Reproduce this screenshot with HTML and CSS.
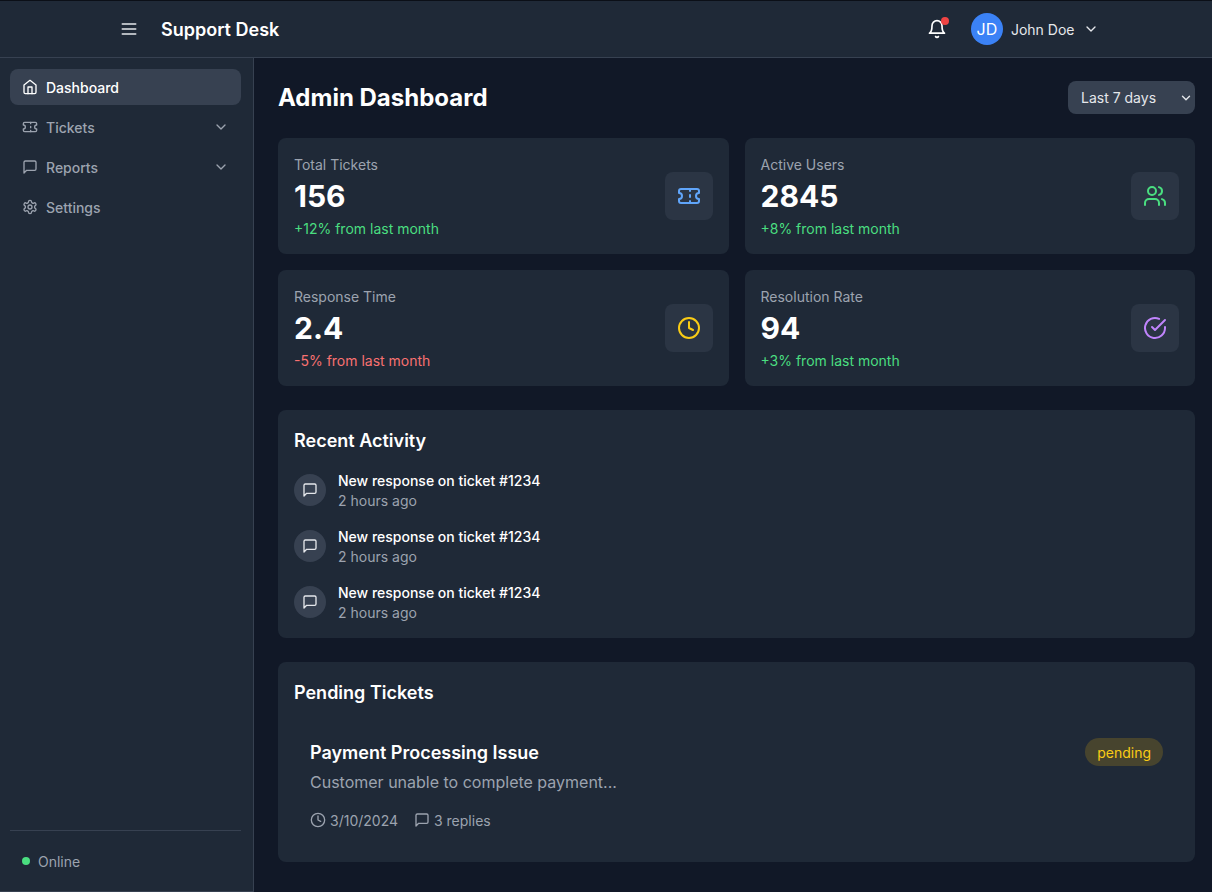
FILE: index.html
```html
<!DOCTYPE html>
<html>
<head>
    <title>Support Desk</title>
    <link rel="stylesheet" href="styles.css">
</head>
<body>
    <svg class="sprites" xmlns="http://www.w3.org/2000/svg">
        <symbol id="i-menu" viewBox="0 0 24 24"><path d="M4 6h16M4 12h16M4 18h16"/></symbol>
        <symbol id="i-home" viewBox="0 0 24 24"><path d="m3 9 9-7 9 7v11a2 2 0 0 1-2 2H5a2 2 0 0 1-2-2z"/><path d="M9 22V12h6v10"/></symbol>
        <symbol id="i-ticket" viewBox="0 0 24 24"><path d="M2 9a3 3 0 0 1 0 6v2a2 2 0 0 0 2 2h16a2 2 0 0 0 2-2v-2a3 3 0 0 1 0-6V7a2 2 0 0 0-2-2H4a2 2 0 0 0-2 2Z"/><path d="M13 5v2M13 17v2M13 11v2"/></symbol>
        <symbol id="i-message" viewBox="0 0 24 24"><path d="M21 15a2 2 0 0 1-2 2H7l-4 4V5a2 2 0 0 1 2-2h14a2 2 0 0 1 2 2z"/></symbol>
        <symbol id="i-settings" viewBox="0 0 24 24"><path d="M12.22 2h-.44a2 2 0 0 0-2 2v.18a2 2 0 0 1-1 1.73l-.43.25a2 2 0 0 1-2 0l-.15-.08a2 2 0 0 0-2.73.73l-.22.38a2 2 0 0 0 .73 2.73l.15.1a2 2 0 0 1 1 1.72v.51a2 2 0 0 1-1 1.74l-.15.09a2 2 0 0 0-.73 2.73l.22.38a2 2 0 0 0 2.73.73l.15-.08a2 2 0 0 1 2 0l.43.25a2 2 0 0 1 1 1.73V20a2 2 0 0 0 2 2h.44a2 2 0 0 0 2-2v-.18a2 2 0 0 1 1-1.73l.43-.25a2 2 0 0 1 2 0l.15.08a2 2 0 0 0 2.73-.73l.22-.39a2 2 0 0 0-.73-2.73l-.15-.08a2 2 0 0 1-1-1.74v-.5a2 2 0 0 1 1-1.74l.15-.09a2 2 0 0 0 .73-2.73l-.22-.38a2 2 0 0 0-2.73-.73l-.15.08a2 2 0 0 1-2 0l-.43-.25a2 2 0 0 1-1-1.73V4a2 2 0 0 0-2-2z"/><circle cx="12" cy="12" r="3"/></symbol>
        <symbol id="i-chevron" viewBox="0 0 24 24"><path d="m6 9 6 6 6-6"/></symbol>
        <symbol id="i-bell" viewBox="0 0 24 24"><path d="M6 8a6 6 0 0 1 12 0c0 7 3 9 3 9H3s3-2 3-9"/><path d="M10.3 21a1.94 1.94 0 0 0 3.4 0"/></symbol>
        <symbol id="i-users" viewBox="0 0 24 24"><path d="M16 21v-2a4 4 0 0 0-4-4H6a4 4 0 0 0-4 4v2"/><circle cx="9" cy="7" r="4"/><path d="M22 21v-2a4 4 0 0 0-3-3.87"/><path d="M16 3.13a4 4 0 0 1 0 7.75"/></symbol>
        <symbol id="i-clock" viewBox="0 0 24 24"><circle cx="12" cy="12" r="10"/><path d="M12 6v6l4 2"/></symbol>
        <symbol id="i-check" viewBox="0 0 24 24"><path d="M22 11.08V12a10 10 0 1 1-5.93-9.14"/><path d="M22 4 12 14.01l-3-3"/></symbol>
    </svg>

    <header class="topbar">
        <div class="topbar-left">
            <svg class="icon icon-20"><use href="#i-menu"/></svg>
            <span class="brand">Support Desk</span>
        </div>
        <div class="topbar-right">
            <div class="bell">
                <svg class="icon icon-20"><use href="#i-bell"/></svg>
                <span class="bell-dot"></span>
            </div>
            <div class="user">
                <span class="avatar">JD</span>
                <span class="user-name">John Doe</span>
                <svg class="icon icon-16"><use href="#i-chevron"/></svg>
            </div>
        </div>
    </header>

    <div class="layout">
        <aside class="sidebar">
            <nav class="nav">
                <a class="nav-item active"><svg class="icon icon-16"><use href="#i-home"/></svg><span>Dashboard</span></a>
                <a class="nav-item"><svg class="icon icon-16"><use href="#i-ticket"/></svg><span>Tickets</span><svg class="icon icon-16 nav-chevron"><use href="#i-chevron"/></svg></a>
                <a class="nav-item"><svg class="icon icon-16"><use href="#i-message"/></svg><span>Reports</span><svg class="icon icon-16 nav-chevron"><use href="#i-chevron"/></svg></a>
                <a class="nav-item"><svg class="icon icon-16"><use href="#i-settings"/></svg><span>Settings</span></a>
            </nav>
            <div class="sidebar-footer">
                <span class="status-dot"></span>
                <span>Online</span>
            </div>
        </aside>

        <main class="content">
            <div class="page-head">
                <h1>Admin Dashboard</h1>
                <select class="range">
                    <option>Last 7 days</option>
                    <option>Last 30 days</option>
                </select>
            </div>

            <section class="stats">
                <div class="card stat">
                    <div>
                        <p class="stat-label">Total Tickets</p>
                        <p class="stat-value">156</p>
                        <p class="stat-delta up">+12% from last month</p>
                    </div>
                    <div class="stat-icon blue"><svg class="icon icon-24"><use href="#i-ticket"/></svg></div>
                </div>
                <div class="card stat">
                    <div>
                        <p class="stat-label">Active Users</p>
                        <p class="stat-value">2845</p>
                        <p class="stat-delta up">+8% from last month</p>
                    </div>
                    <div class="stat-icon green"><svg class="icon icon-24"><use href="#i-users"/></svg></div>
                </div>
                <div class="card stat">
                    <div>
                        <p class="stat-label">Response Time</p>
                        <p class="stat-value">2.4</p>
                        <p class="stat-delta down">-5% from last month</p>
                    </div>
                    <div class="stat-icon yellow"><svg class="icon icon-24"><use href="#i-clock"/></svg></div>
                </div>
                <div class="card stat">
                    <div>
                        <p class="stat-label">Resolution Rate</p>
                        <p class="stat-value">94</p>
                        <p class="stat-delta up">+3% from last month</p>
                    </div>
                    <div class="stat-icon purple"><svg class="icon icon-24"><use href="#i-check"/></svg></div>
                </div>
            </section>

            <section class="card panel">
                <h2>Recent Activity</h2>
                <div class="activity">
                    <div class="activity-item">
                        <span class="activity-icon"><svg class="icon icon-16"><use href="#i-message"/></svg></span>
                        <div>
                            <p class="activity-title">New response on ticket #1234</p>
                            <p class="activity-time">2 hours ago</p>
                        </div>
                    </div>
                    <div class="activity-item">
                        <span class="activity-icon"><svg class="icon icon-16"><use href="#i-message"/></svg></span>
                        <div>
                            <p class="activity-title">New response on ticket #1234</p>
                            <p class="activity-time">2 hours ago</p>
                        </div>
                    </div>
                    <div class="activity-item">
                        <span class="activity-icon"><svg class="icon icon-16"><use href="#i-message"/></svg></span>
                        <div>
                            <p class="activity-title">New response on ticket #1234</p>
                            <p class="activity-time">2 hours ago</p>
                        </div>
                    </div>
                </div>
            </section>

            <section class="card panel">
                <h2>Pending Tickets</h2>
                <div class="ticket">
                    <div class="ticket-head">
                        <h3>Payment Processing Issue</h3>
                        <span class="pill">pending</span>
                    </div>
                    <p class="ticket-desc">Customer unable to complete payment...</p>
                    <div class="ticket-meta">
                        <span class="meta-item"><svg class="icon icon-16"><use href="#i-clock"/></svg>3/10/2024</span>
                        <span class="meta-item"><svg class="icon icon-16"><use href="#i-message"/></svg>3 replies</span>
                    </div>
                </div>
            </section>
        </main>
    </div>
</body>
</html>
```

FILE: styles.css
```css
* {
    box-sizing: border-box;
}
html, body {
    height: 100%;
}
body {
    margin: 0;
    display: flex;
    flex-direction: column;
    overflow: hidden;
    font-family: Inter, "Liberation Sans", sans-serif;
    font-size: 14px;
    line-height: 21px;
    color: #fff;
    background-color: #111827;
}
p, h1, h2, h3 {
    margin: 0;
}
.sprites {
    display: none;
}
.icon {
    flex: none;
    fill: none;
    stroke: currentColor;
    stroke-width: 2;
    stroke-linecap: round;
    stroke-linejoin: round;
}
.icon-16 { width: 16px; height: 16px; }
.icon-20 { width: 20px; height: 20px; }
.icon-24 { width: 24px; height: 24px; }

/* top bar */
.topbar {
    flex: none;
    height: 58px;
    display: flex;
    align-items: center;
    justify-content: space-between;
    padding: 0 113.5px 0 119px;
    background-color: #1f2937;
    border-top: 1px solid #0b0f17;
    border-bottom: 1px solid #374151;
}
.topbar-left {
    display: flex;
    align-items: center;
    gap: 22px;
}
.topbar-left .icon {
    color: #e5e7eb;
}
.brand {
    font-size: 18px;
    line-height: 29px;
    font-weight: 600;
}
.topbar-right {
    display: flex;
    align-items: center;
    gap: 24px;
}
.bell {
    position: relative;
    display: flex;
}
.bell-dot {
    position: absolute;
    top: -2px;
    right: -2px;
    width: 8px;
    height: 8px;
    border-radius: 50%;
    background-color: #ef4444;
}
.user {
    display: flex;
    align-items: center;
    gap: 8px;
    color: #e5e7eb;
}
.avatar {
    width: 32px;
    height: 32px;
    display: flex;
    align-items: center;
    justify-content: center;
    border-radius: 50%;
    font-size: 16px;
    line-height: 24px;
    color: #fff;
    background-color: #3b82f6;
}

/* sidebar */
.layout {
    flex: 1;
    min-height: 0;
    display: flex;
}
.sidebar {
    flex: none;
    width: 254px;
    display: flex;
    flex-direction: column;
    justify-content: space-between;
    padding: 11px 12px 0 10px;
    background-color: #1f2937;
    border-right: 1px solid #374151;
    border-bottom: 1px solid #374151;
}
.nav {
    display: flex;
    flex-direction: column;
    gap: 4px;
}
.nav-item {
    height: 36px;
    display: flex;
    align-items: center;
    gap: 8px;
    padding: 0 12px;
    border-radius: 8px;
    font-weight: 500;
    color: #9ca3af;
}
.nav-item.active {
    color: #fff;
    background-color: #374151;
}
.nav-chevron {
    margin-left: auto;
}
.sidebar-footer {
    height: 61px;
    display: flex;
    align-items: center;
    gap: 8px;
    padding: 0 12px;
    border-top: 1px solid #374151;
    color: #9ca3af;
}
.status-dot {
    width: 8px;
    height: 8px;
    border-radius: 50%;
    background-color: #4ade80;
}

/* main */
.content {
    flex: 1;
    min-width: 0;
    padding: 23px 17px 30px 24px;
    display: flex;
    flex-direction: column;
    gap: 24px;
}
.page-head {
    display: flex;
    align-items: center;
    justify-content: space-between;
}
h1 {
    font-size: 24px;
    line-height: 32px;
    font-weight: 700;
}
.range {
    width: 127px;
    height: 33px;
    padding: 0 24px 0 13px;
    border: 0;
    border-radius: 8px;
    appearance: none;
    font-family: inherit;
    font-size: 14px;
    color: #e5e7eb;
    background: #374151 url("data:image/svg+xml,%3Csvg xmlns='http://www.w3.org/2000/svg' viewBox='0 0 24 24' fill='none' stroke='%23e5e7eb' stroke-width='2.4' stroke-linecap='round' stroke-linejoin='round'%3E%3Cpath d='m6 9 6 6 6-6'/%3E%3C/svg%3E") no-repeat right 2px center / 14px 14px;
}
.card {
    border-radius: 8px;
    background-color: #1f2937;
}
.stats {
    display: grid;
    grid-template-columns: 1fr 1fr;
    gap: 16px;
}
.stat {
    height: 116px;
    display: flex;
    align-items: center;
    justify-content: space-between;
    padding: 16px;
}
.stat-label {
    height: 20px;
    color: #9ca3af;
}
.stat-value {
    margin-top: 4px;
    font-size: 30px;
    line-height: 36px;
    font-weight: 700;
}
.stat-delta {
    height: 20px;
    margin-top: 4px;
}
.up { color: #4ade80; }
.down { color: #f87171; }
.stat-icon {
    width: 48px;
    height: 48px;
    display: flex;
    align-items: center;
    justify-content: center;
    border-radius: 8px;
    background-color: #2b3544;
}
.blue { color: #60a5fa; }
.green { color: #4ade80; }
.yellow { color: #facc15; }
.purple { color: #c084fc; }

.panel {
    padding: 16px;
}
h2 {
    height: 28px;
    font-size: 18px;
    line-height: 29px;
    font-weight: 600;
}
.activity {
    margin-top: 16px;
    display: flex;
    flex-direction: column;
    gap: 16px;
}
.activity-item {
    display: flex;
    align-items: center;
    gap: 12px;
}
.activity-icon {
    width: 32px;
    height: 32px;
    display: flex;
    align-items: center;
    justify-content: center;
    border-radius: 50%;
    color: #e5e7eb;
    background-color: #374151;
}
.activity-title {
    height: 20px;
    font-weight: 500;
}
.activity-time {
    height: 20px;
    color: #9ca3af;
}

.ticket {
    margin-top: 16px;
    padding: 16px;
}
.ticket-head {
    display: flex;
    align-items: flex-start;
    justify-content: space-between;
}
h3 {
    height: 28px;
    font-size: 18px;
    line-height: 29px;
    font-weight: 600;
}
.pill {
    height: 28px;
    display: flex;
    align-items: center;
    padding: 0 12px;
    border-radius: 9999px;
    color: #facc15;
    background-color: rgba(234, 179, 8, 0.2);
}
.ticket-desc {
    margin-top: 4px;
    font-size: 16px;
    line-height: 24px;
    color: #9ca3af;
}
.ticket-meta {
    margin-top: 16px;
    display: flex;
    gap: 16px;
    color: #9ca3af;
}
.meta-item {
    height: 20px;
    display: flex;
    align-items: flex-start;
    gap: 4px;
}
.meta-item .icon {
    margin-top: 2px;
}
```
